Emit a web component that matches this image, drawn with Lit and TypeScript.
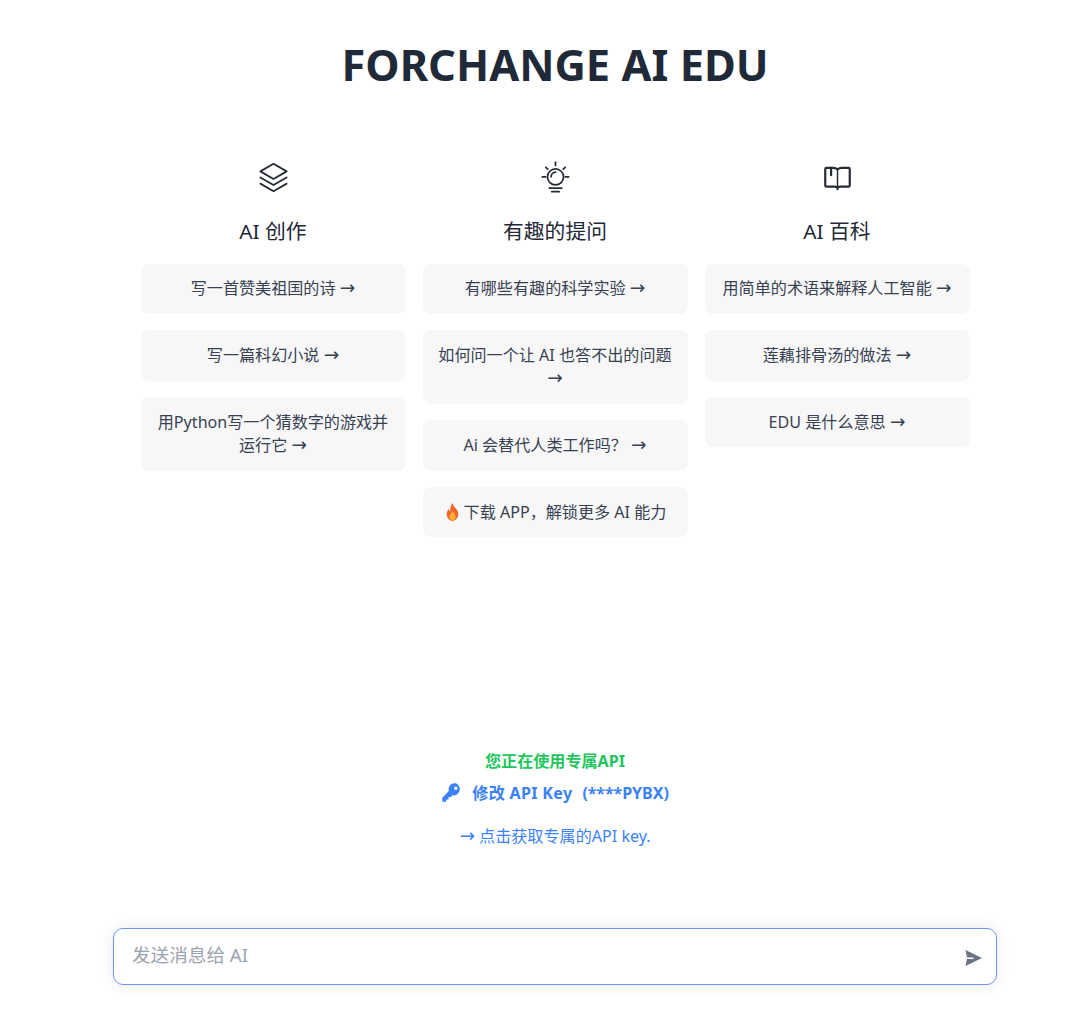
import { LitElement, html, css, svg } from "lit";
import { customElement } from "lit/decorators.js";

const layers = svg`<path d="M12 2.600 3 7.800l9 5.200 9-5.200-9-5.200Z"/><path d="m3 12 9 5.200 9-5.200"/><path d="m3 16.200 9 5.200 9-5.200"/>`;
const bulb = svg`<circle cx="12" cy="11.600" r="5.500"/><path d="M9 11.400c0-1.700 1.300-3 3-3.100"/><path d="M7.700 19.200h8.600M9.500 21.700h5M12 1.400v2.300M3 11.600h2.200M18.800 11.600H21M5.400 5l1.300 1.300M18.600 5l-1.300 1.300"/>`;
const book = svg`<path d="M12 18.700c-.6-.3-1.300-.4-2-.4H4.500c-.5 0-.9-.4-.9-.9V6.300c0-.5.400-.9.900-.9H9c1.200 0 2.200.3 3 1 .8-.7 1.800-1 3-1h4.500c.5 0 .9.400.9.900v11.100c0 .5-.4.900-.9.900H14c-.7 0-1.400.1-2 .4Z"/><path d="M12 18.700v1.300"/><path d="M7.600 5.400v5"/><path stroke-width="1" d="M12 6.400v12.300"/>`;

const columns = [
  { icon: layers, sw: 1.2, title: "AI 创作", items: ["写一首赞美祖国的诗 →", "写一篇科幻小说 →", "用Python写一个猜数字的游戏并运行它 →"] },
  { icon: bulb, sw: 1.2, title: "有趣的提问", items: ["有哪些有趣的科学实验 →", "如何问一个让 AI 也答不出的问题 →", "Ai 会替代人类工作吗？ →", "fire"] },
  { icon: book, sw: 1.5, title: "AI 百科", items: ["用简单的术语来解释人工智能 →", "莲藕排骨汤的做法 →", "EDU 是什么意思 →"] },
];

function withArrow(text: string) {
  const i = text.indexOf("→");
  if (i < 0) return text;
  return html`${text.slice(0, i)}<span class="arrow">→</span>${text.slice(i + 1)}`;
}

@customElement("app-root")
export class AppRoot extends LitElement {
  static styles = css`
    :host {
      display: block;
      height: 1011px;
      overflow: hidden;
      background: #fff;
      font-family: "Noto Sans", "Noto Sans CJK SC", sans-serif;
      color: #374151;
    }
    .page {
      display: flex;
      flex-direction: column;
      align-items: center;
      width: 1050px;
      margin-left: 30px;
      height: 1011px;
    }
    h1 {
      margin: 34px 0 0;
      font-size: 43.400px;
      line-height: 62px;
      font-weight: 700;
      color: #1f2937;
    }
    .cols {
      display: grid;
      grid-template-columns: repeat(3, 265px);
      gap: 17px;
      margin-top: 63.500px;
      height: 384px;
      align-items: start;
    }
    .col {
      display: flex;
      flex-direction: column;
      align-items: center;
    }
    .icon {
      width: 35px;
      height: 35px;
      fill: none;
      stroke: #262b33;
      stroke-linecap: round;
      stroke-linejoin: round;
      display: block;
      flex: none;
    }
    h2 {
      margin: 21px 0 18px;
      font-size: 20.800px;
      line-height: 30px;
      font-weight: 400;
      color: #1f2937;
    }
    .cards {
      display: flex;
      flex-direction: column;
      gap: 16.500px;
      width: 100%;
    }
    .card {
      background: #f7f7f8;
      border-radius: 8px;
      padding: 13.500px 14px;
      font-size: 16.100px;
      line-height: 23.300px;
      text-align: center;
      color: #374151;
    }
    .arrow {
      font-family: "DejaVu Sans", sans-serif;
      font-size: 18.500px;
      line-height: 1;
      vertical-align: 0.500px;
    }
    .fire {
      width: 17px;
      height: 18px;
      vertical-align: -3.500px;
      margin-right: 3px;
    }
    .status {
      margin-top: 205px;
      display: flex;
      flex-direction: column;
      align-items: center;
      font-size: 16.100px;
      line-height: 24px;
    }
    .ok { color: #22c55e; font-weight: 700; }
    .key {
      margin-top: 8px;
      color: #3b82f6;
      font-weight: 700;
      display: flex;
      align-items: center;
      gap: 10px;
      white-space: pre;
    }
    .key svg { width: 21px; height: 21px; fill: #3b82f6; }
    .key-label { letter-spacing: 0.300px; }
    .key-mask { margin-left: 10px; letter-spacing: -0.100px; }
    .key-text { display: flex; }
    .link { margin-top: 19px; color: #3b82f6; }
    .input {
      margin-top: 80px;
      width: 884px;
      height: 57px;
      box-sizing: border-box;
      border: 1.300px solid #6d94f0;
      border-radius: 10px;
      box-shadow: 0 0 15px rgba(0, 0, 0, 0.09);
      display: flex;
      align-items: center;
      justify-content: space-between;
      padding: 0 14px 0 18px;
      font-size: 18.600px;
      color: #9ca3af;
      background: #fff;
    }
    .placeholder { margin-bottom: 5px; }
    .send { width: 17px; height: 16px; fill: #6b7280; margin-top: 3px; }
  `;

  private card(text: string) {
    if (text === "fire") {
      return html`<div class="card"><svg class="fire" viewBox="0 0 16 17"><path fill="#f4662a" d="M8 0c.6 2.600 2 3.800 3.300 5.400C12.700 7 13.500 8.700 13.500 10.500 13.500 14 11 17 8 17S2.500 14 2.500 10.500c0-2 .9-3.500 1.900-4.700.3 1 .8 1.700 1.500 2.100C5.700 5 6.500 2.200 8 0Z"/><path fill="#fdae2c" d="M8 7.500c.5 1.300 2.800 2.800 2.800 5.500 0 2.200-1.300 3.600-2.800 3.600S5.200 15.200 5.200 13c0-2.500 2.300-3.800 2.800-5.500Z"/></svg>下载 APP，解锁更多 AI 能力</div>`;
    }
    return html`<div class="card">${withArrow(text)}</div>`;
  }

  render() {
    return html`<div class="page">
      <h1>FORCHANGE AI EDU</h1>
      <div class="cols">
        ${columns.map(
          (c) => html`<div class="col">
            <svg class="icon" viewBox="0 0 24 24" stroke-width=${c.sw}>${c.icon}</svg>
            <h2>${c.title}</h2>
            <div class="cards">${c.items.map((i) => this.card(i))}</div>
          </div>`
        )}
      </div>
      <div class="status">
        <div class="ok">您正在使用专属API</div>
        <div class="key"><svg viewBox="0 0 24 24"><path d="M15.500 1.500a7 7 0 0 0-6.700 9.100L1.500 18v4.500H6v-2.500h2.500v-2.500H11l2.200-2.300a7 7 0 1 0 2.300-14.200Zm1.500 3.500a2 2 0 1 1 0 4 2 2 0 0 1 0-4Z"/></svg><span class="key-text"><span class="key-label">修改 API Key</span><span class="key-mask">(****PYBX)</span></span></div>
        <div class="link">${withArrow("→ 点击获取专属的API key.")}</div>
      </div>
      <div class="input">
        <span class="placeholder">发送消息给 AI</span>
        <svg class="send" viewBox="0 0 17 16"><path d="M0.500 0 17 8 0.500 16 2 9H8.500V7.500H2Z"/></svg>
      </div>
    </div>`;
  }
}
